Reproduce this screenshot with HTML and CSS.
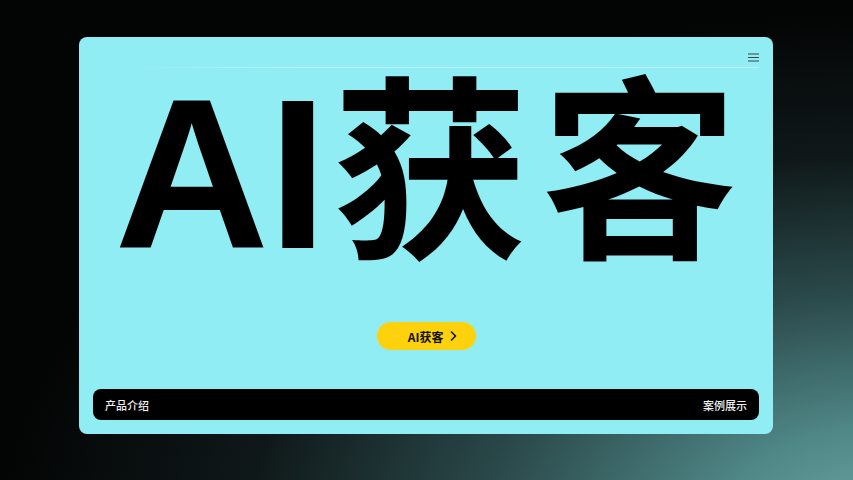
FILE: index.html
```html
<!DOCTYPE html>
<html lang="zh-CN">
<head>
<meta charset="utf-8">
<title>AI获客</title>
<link rel="stylesheet" href="styles.css">
</head>
<body>
  <div class="card">
    <header class="header">
      <button class="menu" aria-label="菜单">
        <svg width="11" height="9" viewBox="0 0 11 9"><path d="M0 1h11M0 4.5h11M0 8h11" stroke="#3d4748" stroke-width="1.1" fill="none"/></svg>
      </button>
    </header>
    <h1 class="hero"><span class="latin">AI</span><span class="cjk">获客</span></h1>
    <div class="cta-row">
      <a class="cta" href="#">AI获客
        <svg class="chev" width="7" height="10" viewBox="0 0 7 10"><path d="M1.5 1l4 4-4 4" stroke="#111" stroke-width="1.6" fill="none" stroke-linecap="round" stroke-linejoin="round"/></svg>
      </a>
    </div>
    <nav class="bar">
      <span>产品介绍</span>
      <span>案例展示</span>
    </nav>
  </div>
</body>
</html>
```
FILE: styles.css
```css
* { box-sizing: border-box; }
html, body { margin: 0; height: 100%; }
body {
  width: 853px;
  height: 480px;
  overflow: hidden;
  padding: 37px 80px 46px 79px;
  font-family: "Noto Sans CJK SC", "Noto Sans", sans-serif;
  background:
    radial-gradient(ellipse 900px 520px at 105% 110%, #6ea6a6 0%, #4f8686 20%, #2b4a4b 45%, #0f1819 72%, #030404 100%),
    #000;
}
.card {
  width: 694px;
  height: 397px;
  background: #90edf4;
  border-radius: 8px;
  display: flex;
  flex-direction: column;
  padding: 0 14px 14px;
}
.header {
  height: 31px;
  display: flex;
  justify-content: flex-end;
  align-items: center;
  border-bottom: 1px solid transparent;
  border-image: linear-gradient(90deg, rgba(255,255,255,0) 5%, rgba(255,255,255,0.35) 30%, rgba(255,255,255,0.35) 100%) 1;
  padding-top: 10px;
}
.menu {
  background: none;
  border: 0;
  padding: 0;
  display: flex;
}
.hero {
  margin: 0;
  height: 200px;
  line-height: 180px;
  font-weight: 700;
  color: #000;
  text-align: center;
  white-space: nowrap;
}
.latin {
  font-family: "Liberation Sans", Arial, sans-serif;
  font-size: 214px;
  letter-spacing: -1px;
}
.cjk {
  font-family: "Noto Sans CJK SC", sans-serif;
  font-size: 196px;
  letter-spacing: 13px;
  margin-left: 6px;
  margin-right: -13px;
  vertical-align: 5px;
}
.cta-row {
  display: flex;
  justify-content: center;
  margin-top: 54px;
}
.cta {
  width: 99px;
  height: 28px;
  border-radius: 14px;
  background: #fdd20d;
  color: #111;
  text-decoration: none;
  font-size: 12px;
  font-weight: 700;
  display: flex;
  align-items: center;
  justify-content: flex-end;
  gap: 6px;
  padding-right: 19px;
}
.bar {
  margin-top: auto;
  height: 31px;
  background: #000;
  border-radius: 8px;
  color: #f2f2f2;
  font-size: 11px;
  font-weight: 500;
  display: flex;
  justify-content: space-between;
  align-items: center;
  padding: 0 12px;
}
```
